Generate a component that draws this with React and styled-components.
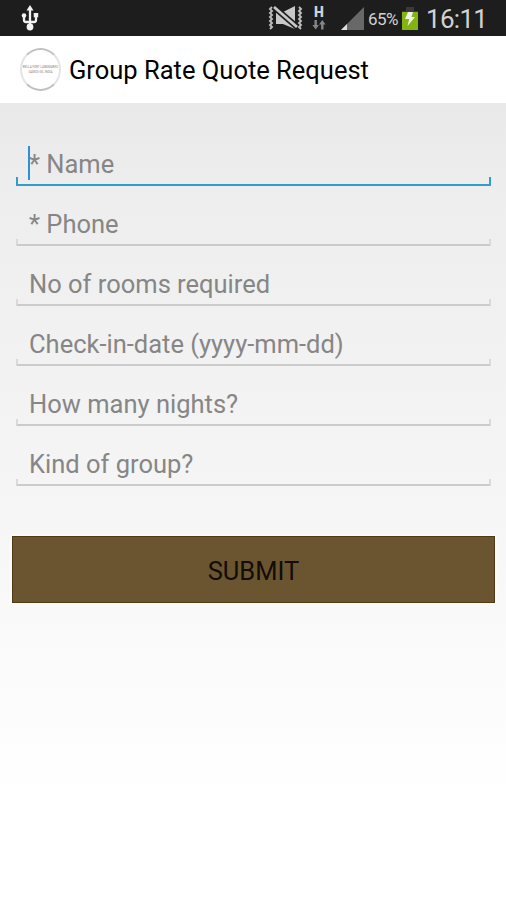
import styled, { createGlobalStyle } from "styled-components";

const GlobalStyle = createGlobalStyle`
  :root {
    --bar-color: #1d1d1d;
    --status-color: #d2d2d2;
    --accent-color: #2f9fc9;
    --line-color: #cbcbcb;
    --hint-color: #868686;
    --button-color: #6b5531;
  }

  * {
    box-sizing: border-box;
    padding: 0;
    margin: 0;
  }

  body {
    font-family: Roboto, "Liberation Sans", sans-serif;
    background-color: #fff;
    overflow: hidden;
  }
`;

const fields = [
  { label: "* Name", active: true },
  { label: "* Phone" },
  { label: "No of rooms required" },
  { label: "Check-in-date (yyyy-mm-dd)" },
  { label: "How many nights?" },
  { label: "Kind of group?" },
];

function UsbIcon() {
  return (
    <svg width="18" height="26" viewBox="0 0 18 26" fill="none" stroke="#f2f2f2" strokeWidth="2.300">
      <path d="M9 4V22M3 11v4q0 2 2 2h8q2 0 2-2V10" />
      <path d="M9 0l3.500 5.500h-7z" fill="#f2f2f2" stroke="none" />
      <circle cx="3" cy="10.500" r="2.300" fill="#f2f2f2" stroke="none" />
      <path d="M12.700 8h4.500v4.300h-4.500z" fill="#f2f2f2" stroke="none" />
      <circle cx="9" cy="22" r="3.400" fill="#f2f2f2" stroke="none" />
    </svg>
  );
}

function MuteIcon() {
  return (
    <svg width="36" height="26" viewBox="0 0 36 26">
      <path d="M4 2l-2 2 2 2-2 2 2 2-2 2 2 2-2 2 2 2-2 2 2 2-2 2" fill="none" stroke="#bdbdbd" strokeWidth="1.900" />
      <path d="M31 2l2 2-2 2 2 2-2 2 2 2-2 2 2 2-2 2 2 2-2 2 2 2" fill="none" stroke="#bdbdbd" strokeWidth="1.900" />
      <path d="M8 7v12h7l12 5V1L15 7z" fill="#c8c8c8" />
      <path d="M6 2l23 20" stroke="#1d1d1d" strokeWidth="6" />
      <path d="M6 2l23 20" stroke="#c8c8c8" strokeWidth="2.800" />
    </svg>
  );
}

function DataArrows() {
  return (
    <svg width="14" height="10" viewBox="0 0 14 10" fill="#858585">
      <path d="M2.500 0h2.400v5H7L3.700 9.500.4 5h2.100z" />
      <path d="M9.100 9.500h2.400v-5h2.100L10.300 0 7 4.500h2.100z" />
    </svg>
  );
}

function SignalIcon() {
  return (
    <svg width="23" height="23" viewBox="0 0 23 23">
      <path d="M23 0v23H0z" fill="#686868" />
      <path d="M6 17v6H0z" fill="#dedede" />
    </svg>
  );
}

function BatteryIcon() {
  return (
    <svg width="18" height="25" viewBox="0 0 18 25">
      <path d="M5 0h8v4h4v5H1V4h4z" fill="#3f3838" />
      <path d="M1 5h16v18H1z" fill="#82b512" />
      <path d="M7 5h5l-1.500 5H14L6.500 19l1.700-7H4z" fill="#f1f3e9" />
    </svg>
  );
}

function App() {
  return (
    <>
      <GlobalStyle />
      <Screen>
        <StatusBar>
          <UsbIcon />
          <StatusIcons>
            <MuteIcon />
            <DataType>
              <DataLetter>H</DataLetter>
              <DataArrows />
            </DataType>
            <SignalIcon />
            <Percent>65%</Percent>
            <BatteryIcon />
            <Clock>16:11</Clock>
          </StatusIcons>
        </StatusBar>
        <Header>
          <Logo>
            <span>BELLA FORT LANDMARKS</span>
            <span>SAMOS GIL INDIA</span>
          </Logo>
          <Title>Group Rate Quote Request</Title>
        </Header>
        <Form>
          {fields.map(({ label, active }) => (
            <Field key={label} $active={active}>
              {active && <Caret />}
              <Hint>{label}</Hint>
            </Field>
          ))}
          <SubmitButton type="button">SUBMIT</SubmitButton>
        </Form>
      </Screen>
    </>
  );
}

const Screen = styled.main`
  width: 506px;
  height: 900px;
  display: flex;
  flex-direction: column;
  background: linear-gradient(#e9e9e9 104px, #eee 200px, #f5f5f5 490px, #fafafa 640px, #fff 800px);
`;

const StatusBar = styled.div`
  height: 36px;
  flex: none;
  display: flex;
  align-items: flex-start;
  justify-content: space-between;
  padding: 5px 18px 0 21px;
  background-color: var(--bar-color);
  color: var(--status-color);
`;

const StatusIcons = styled.div`
  display: flex;
  align-items: flex-start;

  > svg {
    margin-top: 2px;
  }

  > svg:first-child {
    margin-top: 0;
  }
`;

const DataType = styled.div`
  width: 14px;
  display: flex;
  flex-direction: column;
  align-items: center;
  margin: 0 15px 0 8px;
`;

const DataLetter = styled.span`
  height: 15px;
  font-size: 14px;
  font-weight: 900;
  line-height: 15px;
`;

const Percent = styled.span`
  width: 37px;
  padding-left: 4px;
  font-size: 17px;
  line-height: 28px;
  letter-spacing: -0.5px;
`;

const Clock = styled.span`
  width: 62px;
  margin-left: 7px;
  font-size: 26px;
  line-height: 29px;
  letter-spacing: -0.7px;
  white-space: nowrap;
`;

const Header = styled.header`
  height: 67px;
  flex: none;
  display: flex;
  align-items: center;
  gap: 8px;
  padding: 0 20px;
  background-color: #fff;
`;

const Logo = styled.div`
  width: 41px;
  height: 43px;
  display: flex;
  flex-direction: column;
  align-items: center;
  justify-content: center;
  border: 2px solid #e4e4e4;
  border-top-color: #c0c0c0;
  border-bottom-color: #c0c0c0;
  border-radius: 50%;
  color: #8c8580;
  font-size: 3px;
  line-height: 5px;
  white-space: nowrap;
`;

const Title = styled.h1`
  color: #000;
  font-size: 25.500px;
  font-weight: 400;
  line-height: 32px;
  padding-top: 1px;
  white-space: nowrap;
`;

const Form = styled.form`
  display: flex;
  flex-direction: column;
  gap: 18px;
  padding: 41px 11px 0 12px;
`;

const Field = styled.label`
  height: 42px;
  display: flex;
  align-items: flex-start;
  position: relative;
  margin: 0 4px;
  padding-left: 13px;

  &::after {
    content: "";
    position: absolute;
    right: 0;
    bottom: 0;
    left: 0;
    height: ${({ $active }) => ($active ? 7 : 5)}px;
    border: 2px solid ${({ $active }) => ($active ? "var(--accent-color)" : "var(--line-color)")};
    border-right-color: ${({ $active }) => ($active ? "var(--accent-color)" : "#dadada")};
    border-left-color: ${({ $active }) => ($active ? "var(--accent-color)" : "#dadada")};
    border-top: none;
    border-radius: 0 0 1px 1px;
  }
`;

const Caret = styled.span`
  position: absolute;
  top: 2px;
  left: 12px;
  width: 2px;
  height: 34px;
  background-color: #2c8fd8;
`;

const Hint = styled.span`
  color: var(--hint-color);
  font-size: 25.500px;
  line-height: 40px;
  white-space: nowrap;
`;

const SubmitButton = styled.button`
  height: 67px;
  margin-top: 32px;
  padding-top: 2px;
  background-color: var(--button-color);
  border: 1px solid #543812;
  box-shadow: 0 0 2px 1px #fff;
  color: #120d06;
  font-family: inherit;
  font-size: 25.500px;
`;

export default App;
